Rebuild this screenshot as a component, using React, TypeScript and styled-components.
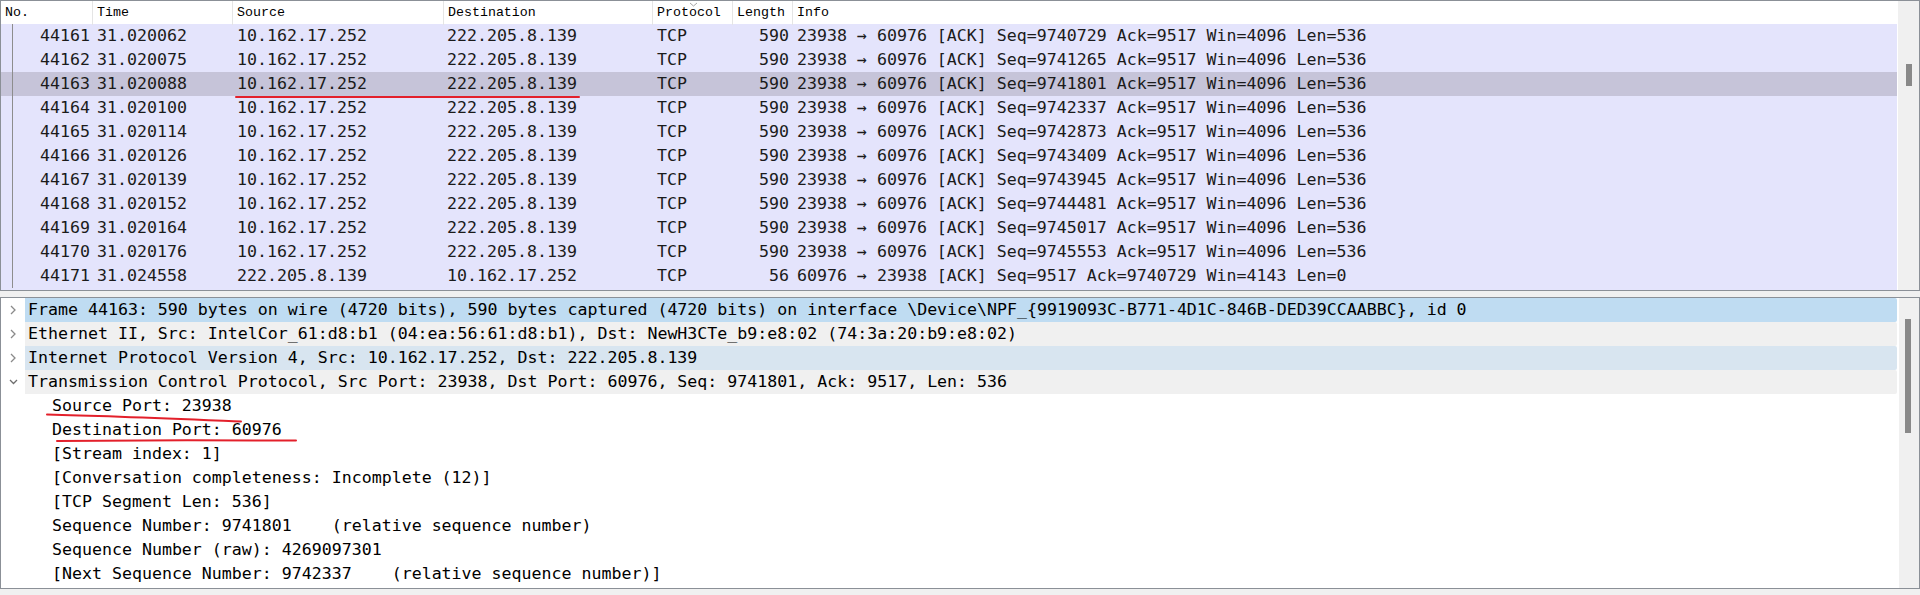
import React from 'react';
import styled, { createGlobalStyle } from 'styled-components';

const MONO = `"DejaVu Sans Mono", "Liberation Mono", monospace`;

const GlobalStyle = createGlobalStyle`
  html, body {
    margin: 0;
    padding: 0;
    background: #f0f0f0;
    overflow: hidden;
  }
  #root {
    width: 1920px;
    height: 595px;
  }
`;

const Page = styled.div`
  position: relative;
  width: 1920px;
  height: 595px;
  display: flex;
  flex-direction: column;
  gap: 6px;
  background: #f0f0f0;
  font-family: ${MONO};
`;

const Pane = styled.section<{ $height: number; $bar: number }>`
  height: ${(p) => p.$height}px;
  flex: none;
  box-sizing: border-box;
  border: 1px solid #8b9097;
  display: grid;
  grid-template-columns: 1fr ${(p) => p.$bar}px;
  background: #fff;
  overflow: hidden;
`;

const Scrollbar = styled.div<{ $thumbLeft: number }>`
  background: #f0f0f0;
  border-left: 1px solid #fff;
  padding-left: ${(p) => p.$thumbLeft}px;
`;

const Thumb = styled.div<{ $top: number; $height: number }>`
  width: 6px;
  margin-top: ${(p) => p.$top}px;
  height: ${(p) => p.$height}px;
  background: #898989;
`;

/* ---------- packet list ---------- */

const COLS = '91px 140px 211px 209px 80px 60px 1fr';

const ListArea = styled.div`
  display: flex;
  flex-direction: column;
  min-width: 0;
`;

const HeaderRow = styled.div`
  display: grid;
  grid-template-columns: ${COLS};
  height: 23px;
  background: #fff;
`;

const HeaderCell = styled.div<{ $first?: boolean }>`
  position: relative;
  padding-left: 4px;
  border-left: ${(p) => (p.$first ? 'none' : '1px solid #e5e5e5')};
  font-family: "Liberation Mono", monospace;
  font-size: 13.3px;
  line-height: 24px;
  color: #000;
`;

const SortMark = styled.svg`
  position: absolute;
  left: 36px;
  top: 1px;
`;

const ListBody = styled.div`
  flex: 1;
  background: #e4e4fc;
`;

const PacketRow = styled.div<{ $selected?: boolean }>`
  display: grid;
  grid-template-columns: ${COLS};
  height: 24px;
  line-height: 24px;
  font-size: 16.6px;
  color: #1b1b1b;
  white-space: pre;
  background: ${(p) => (p.$selected ? '#c6c4d9' : '#e4e4fc')};
`;

const Cell = styled.div<{ $align?: 'left' | 'right'; $pad?: number }>`
  overflow: hidden;
  text-align: ${(p) => p.$align || 'left'};
  padding-left: ${(p) => (p.$align === 'right' ? 0 : p.$pad ?? 5)}px;
  padding-right: ${(p) => (p.$align === 'right' ? p.$pad ?? 2 : 0)}px;
`;

// thin line at the left marks packets of the same conversation
const NoCell = styled(Cell)`
  background: linear-gradient(#8d8d8d, #8d8d8d) 11px 0 / 1px 100% no-repeat;
`;

/* ---------- detail tree ---------- */

const TreeArea = styled.div`
  display: flex;
  flex-direction: column;
  min-width: 0;
  margin-right: 1px;
`;

const TreeRow = styled.div`
  display: flex;
  height: 24px;
  font-size: 16.6px;
  color: #000;
`;

const Expander = styled.div`
  width: 24px;
  flex: none;
  display: flex;
  align-items: center;
  justify-content: center;
`;

const TreeLabel = styled.div<{ $bg?: string; $indent: number }>`
  flex: 1;
  min-width: 0;
  padding-left: ${(p) => p.$indent}px;
  line-height: 24px;
  white-space: pre;
  overflow: hidden;
  background: ${(p) => p.$bg || 'transparent'};
  border-radius: 0 2px 2px 0;
`;

const Annotations = styled.svg`
  position: absolute;
  left: 0;
  top: 0;
  pointer-events: none;
`;

type Packet = {
  no: number;
  time: string;
  src: string;
  dst: string;
  len: number;
  info: string;
};

const seqs = [
  '9740729', '9741265', '9741801', '9742337', '9742873', '9743409',
  '9743945', '9744481', '9745017', '9745553',
];
const times = [
  '31.020062', '31.020075', '31.020088', '31.020100', '31.020114',
  '31.020126', '31.020139', '31.020152', '31.020164', '31.020176',
];

const packets: Packet[] = [
  ...seqs.map((s, i) => ({
    no: 44161 + i,
    time: times[i],
    src: '10.162.17.252',
    dst: '222.205.8.139',
    len: 590,
    info: `23938 → 60976 [ACK] Seq=${s} Ack=9517 Win=4096 Len=536`,
  })),
  {
    no: 44171,
    time: '31.024558',
    src: '222.205.8.139',
    dst: '10.162.17.252',
    len: 56,
    info: '60976 → 23938 [ACK] Seq=9517 Ack=9740729 Win=4143 Len=0',
  },
];

type Node = { text: string; depth: number; state?: 'open' | 'closed'; bg?: string };

const tree: Node[] = [
  {
    text: 'Frame 44163: 590 bytes on wire (4720 bits), 590 bytes captured (4720 bits) on interface \\Device\\NPF_{9919093C-B771-4D1C-846B-DED39CCAABBC}, id 0',
    depth: 0,
    state: 'closed',
    bg: '#bfdcf2',
  },
  {
    text: 'Ethernet II, Src: IntelCor_61:d8:b1 (04:ea:56:61:d8:b1), Dst: NewH3CTe_b9:e8:02 (74:3a:20:b9:e8:02)',
    depth: 0,
    state: 'closed',
    bg: '#f0f0f0',
  },
  {
    text: 'Internet Protocol Version 4, Src: 10.162.17.252, Dst: 222.205.8.139',
    depth: 0,
    state: 'closed',
    bg: '#d8e5f0',
  },
  {
    text: 'Transmission Control Protocol, Src Port: 23938, Dst Port: 60976, Seq: 9741801, Ack: 9517, Len: 536',
    depth: 0,
    state: 'open',
    bg: '#f0f0f0',
  },
  { text: 'Source Port: 23938', depth: 1 },
  { text: 'Destination Port: 60976', depth: 1 },
  { text: '[Stream index: 1]', depth: 1 },
  { text: '[Conversation completeness: Incomplete (12)]', depth: 1 },
  { text: '[TCP Segment Len: 536]', depth: 1 },
  { text: 'Sequence Number: 9741801    (relative sequence number)', depth: 1 },
  { text: 'Sequence Number (raw): 4269097301', depth: 1 },
  { text: '[Next Sequence Number: 9742337    (relative sequence number)]', depth: 1 },
];

const Chevron: React.FC<{ open?: boolean }> = ({ open }) =>
  open ? (
    <svg width="9" height="6" viewBox="0 0 9 6">
      <polyline points="1,1 4.5,4.5 8,1" fill="none" stroke="#6e6e6e" strokeWidth="1.3" />
    </svg>
  ) : (
    <svg width="6" height="10" viewBox="0 0 6 10">
      <polyline points="1,1 5,5 1,9" fill="none" stroke="#8a8a8a" strokeWidth="1.3" />
    </svg>
  );

const headers = ['No.', 'Time', 'Source', 'Destination', 'Protocol', 'Length', 'Info'];

const App: React.FC = () => (
  <Page>
    <GlobalStyle />
    <Pane $height={291} $bar={22}>
      <ListArea>
        <HeaderRow>
          {headers.map((h, i) => (
            <HeaderCell key={h} $first={i === 0}>
              {h}
              {h === 'Protocol' && (
                <SortMark width="9" height="5" viewBox="0 0 9 5">
                  <polyline points="1,1 4.5,4 8,1" fill="none" stroke="#a6a6a6" strokeWidth="1" />
                </SortMark>
              )}
            </HeaderCell>
          ))}
        </HeaderRow>
        <ListBody>
          {packets.map((p) => (
            <PacketRow key={p.no} $selected={p.no === 44163}>
              <NoCell $align="right" $pad={2}>{p.no}</NoCell>
              <Cell>{p.time}</Cell>
              <Cell>{p.src}</Cell>
              <Cell $pad={4}>{p.dst}</Cell>
              <Cell>TCP</Cell>
              <Cell $align="right" $pad={3}>{p.len}</Cell>
              <Cell>{p.info}</Cell>
            </PacketRow>
          ))}
        </ListBody>
      </ListArea>
      <Scrollbar $thumbLeft={8}>
        <Thumb $top={63} $height={22} />
      </Scrollbar>
    </Pane>

    <Pane $height={292} $bar={21}>
      <TreeArea>
        {tree.map((n, i) => (
          <TreeRow key={i}>
            <Expander>{n.state && <Chevron open={n.state === 'open'} />}</Expander>
            <TreeLabel $bg={n.bg} $indent={n.depth === 0 ? 3 : 27}>
              {n.text}
            </TreeLabel>
          </TreeRow>
        ))}
      </TreeArea>
      <Scrollbar $thumbLeft={6}>
        <Thumb $top={21} $height={114} />
      </Scrollbar>
    </Pane>

    <Annotations width="1920" height="595" viewBox="0 0 1920 595">
      <g fill="none" stroke="#e3202b" strokeWidth="2" strokeLinecap="round">
        <line x1="236" y1="97" x2="579" y2="97" />
        <path d="M47 414.5 C 110 416, 180 419, 241 421.5" />
        <path d="M57 441 C 130 440.5, 220 440, 296 440.5" />
      </g>
    </Annotations>
  </Page>
);

export default App;
